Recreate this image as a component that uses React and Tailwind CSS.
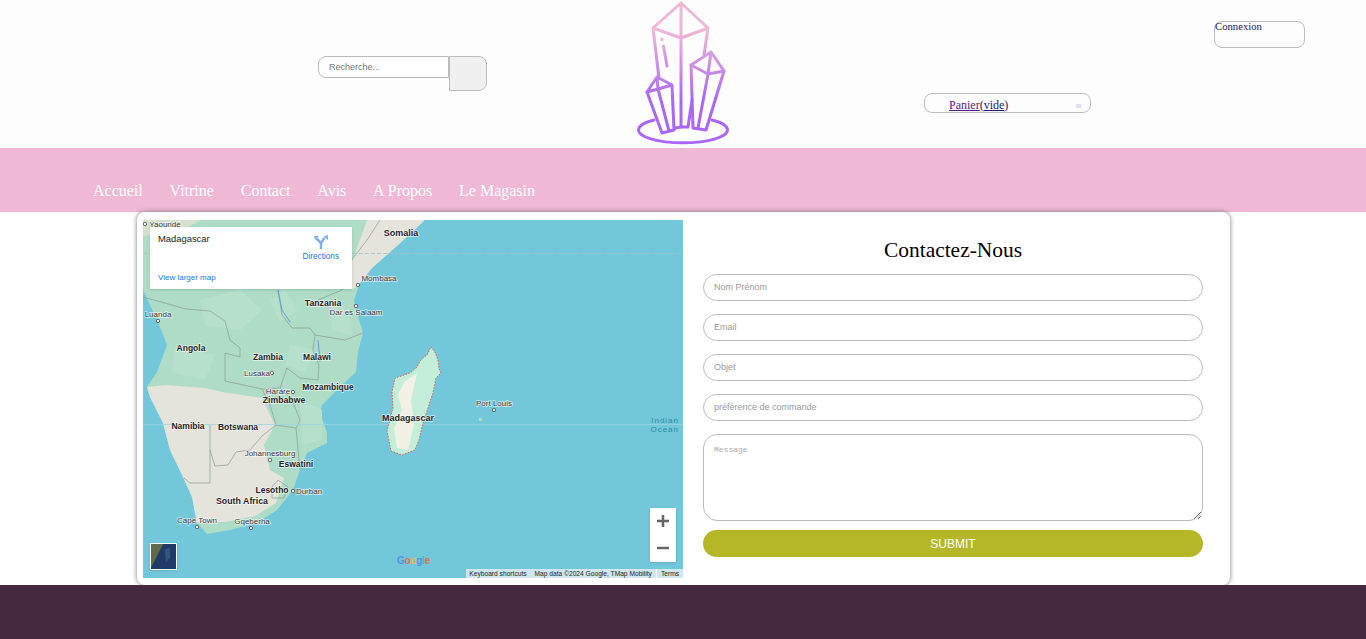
import React from "react";

const serif = "font-['Liberation_Serif',serif]";
const sans = "font-['Liberation_Sans',sans-serif]";

const navItems = ["Accueil", "Vitrine", "Contact", "Avis", "A Propos", "Le Magasin"];
const fields = ["Nom Prénom", "Email", "Objet", "préférence de commande"];

const bigLabels = [
  ["Somalia", 401, 236, 9],
  ["Tanzania", 323, 306, 8.7],
  ["Angola", 191, 351, 8.5],
  ["Zambia", 268, 360, 8.5],
  ["Malawi", 317, 360, 8.5],
  ["Mozambique", 328, 390, 8.5],
  ["Zimbabwe", 284, 403, 8.7],
  ["Namibia", 188, 429, 8.5],
  ["Botswana", 238, 430, 8.5],
  ["Madagascar", 408, 421, 9],
  ["Eswatini", 296, 467, 8.5],
  ["Lesotho", 272, 493, 8.5],
  ["South Africa", 242, 504, 8.8],
];

const smallLabels = [
  ["Mombasa", 379, 281],
  ["Dar es Salaam", 356, 315],
  ["Luanda", 158, 317],
  ["Lusaka", 257, 376],
  ["Harare", 278, 394],
  ["Johannesburg", 270, 456],
  ["Durban", 309, 494],
  ["Cape Town", 197, 523],
  ["Gqeberha", 252, 524],
  ["Port Louis", 494, 406],
  ["Yaoundé", 165, 227],
];

const dots = [
  [358, 285], [356, 306], [158, 321], [272, 373], [293, 392],
  [270, 460], [293, 491], [197, 527], [251, 528], [494, 410], [145, 224],
];

const patches = [
  "M200 300 L240 290 L262 310 L240 330 L205 325 Z",
  "M175 345 L215 355 L205 380 L172 372 Z",
  "M290 345 L315 350 L305 372 L285 365 Z",
  "M330 300 L350 310 L352 335 L332 330 Z",
  "M300 400 L322 410 L322 440 L302 445 Z",
  "M270 300 L285 290 L298 310 L280 322 Z",
];

function MapDrawing() {
  return (
    <svg viewBox="143 220 540 358" className="block w-full h-full">
      <rect x="143" y="220" width="540" height="358" fill="#73c7db" />
      <path
        d="M143 220 L425 220 L398 245 L372 268 L360 283 L354 300 L358 316 L363 333 L358 352 L356 372 L342 385 L322 405 L320 412 L327 433 L327 443 L307 453 L300 470 L293 490 L277 510 L257 523 L230 530 L207 534 L197 523 L192 497 L183 477 L170 450 L163 423 L150 397 L147 387 L157 372 L167 345 L158 322 L150 305 L143 290 Z"
        fill="#aedcc7"
      />
      {patches.map((d) => (
        <path key={d} d={d} fill="#b7e0cc" />
      ))}
      <path
        d="M150 397 L147 387 L165 385 L205 388 L222 392 L262 398 L275 425 L264 445 L270 470 L284 478 L276 503 L255 516 L225 522 L205 522 L197 523 L192 497 L183 477 L170 450 L163 423 Z"
        fill="#e4e3dc"
      />
      <path d="M352 290 L352 262 L367 220 L425 220 L398 245 L372 268 L360 283 Z" fill="#e4e3dc" />
      <path d="M143 220 L200 220 L180 232 L143 236 Z" fill="#d6e0cf" />

      <g fill="none" stroke="#8b9a94" strokeWidth="0.7">
        <path d="M143 297 L186 309 L210 311 L225 321 L230 340 L240 348 L240 357 L225 353 L225 381 L262 389" />
        <path d="M278 290 L282 315 L292 328 L310 328 L315 335 L313 350 L319 365 L318 380 L300 378 L287 368 L280 388 L262 389" />
        <path d="M315 335 L345 340 L363 333" />
        <path d="M210 425 L210 483 M210 450 L215 466 L228 465 L236 452 L250 450 L262 436 L276 425 L296 428 L300 470" />
        <path d="M280 388 L292 400 L300 420 L296 428 M262 389 L270 405 L276 425" />
        <path d="M184 478 L190 483 L210 483" />
        <path d="M272 487 L278 480 L288 487 L284 498 L272 498 Z" />
        <path d="M380 220 L367 240 L350 262 L342 290 L318 300" />
      </g>
      <path d="M278 290 L282 310 L290 322 M318 340 L320 362" fill="none" stroke="#5b9fd8" strokeWidth="1" />
      <path d="M143 253.500 L683 253.500" stroke="#a7bfc7" strokeWidth="0.8" strokeDasharray="4 2" />
      <path d="M143 424.500 L683 424.500" stroke="#9ed4e1" strokeWidth="0.8" />

      <path
        d="M431 347 L435 352 L438 360 L439 369 L441 373 L436 378 L433 393 L429 405 L423 423 L419 440 L415 450 L402 455 L391 451 L387 431 L391 415 L393 408 L392 392 L395 378 L404 375 L410 373 L417 367 L420 361 L424 357 L427 355 Z"
        fill="#c4edda"
        stroke="#e0564f"
        strokeWidth="1"
        strokeDasharray="1.500 1.500"
      />
      <path d="M417 373 L404 382 L398 395 L402 410 L394 428 L397 448 L408 450 L414 425 L411 400 Z" fill="#f3f1e6" />
      <path d="M479 418 L482 418 L482 421 L479 421 Z" fill="#aedcc7" />

      {dots.map(([x, y]) => (
        <circle key={`${x}-${y}`} cx={x} cy={y} r="1.700" fill="#fff" stroke="#444" strokeWidth="0.8" />
      ))}

      <g className={sans} textAnchor="middle" paintOrder="stroke" stroke="#ffffff" strokeWidth="1.500" strokeOpacity="0.7">
        {bigLabels.map(([label, x, y, size]) => (
          <text key={label} x={x} y={y} fontSize={size} fontWeight="700" fill="#222">
            {label}
          </text>
        ))}
        {smallLabels.map(([label, x, y]) => (
          <text key={label} x={x} y={y} fontSize="8" fill="#333">
            {label}
          </text>
        ))}
      </g>
      <g className={sans} textAnchor="end" fontSize="8" fill="#2f8ba6" letterSpacing="1">
        <text x="679" y="423">Indian</text>
        <text x="679" y="432">Ocean</text>
      </g>
    </svg>
  );
}

function MapOverlays() {
  return (
    <>
      <div className={`absolute left-[7px] top-[7px] w-[202px] h-[62px] bg-white shadow-sm ${sans}`}>
        <p className="absolute left-2 top-[6px] text-[9.400px] leading-[11px] text-[#222]">Madagascar</p>
        <div className="absolute right-[13px] top-2 flex flex-col items-center">
          <svg viewBox="0 0 14 14" className="w-[14px] h-[14px]">
            <path d="M7 14 V8 L2.500 3.500 M7 8 L10.500 3" fill="none" stroke="#7fb0ee" strokeWidth="2.500" />
            <path d="M0 1 H5 L1 5 Z M14 0 V5 L9.500 1.500 Z" fill="#7fb0ee" />
          </svg>
          <span className="text-[8.200px] leading-[11px] text-[#1a73e8] mt-[2px]">Directions</span>
        </div>
        <a className="absolute left-2 top-[45px] text-[8px] leading-[11px] text-[#1a73e8]">View larger map</a>
      </div>

      <div className="absolute left-[7px] bottom-2 w-[27px] h-[27px] border border-white shadow-sm bg-[#1f3a66] overflow-hidden">
        <svg viewBox="0 0 27 27" className="block w-full h-full">
          <path d="M0 0 H13 L9 8 L4 18 L0 25 Z" fill="#5f6a4a" />
          <path d="M15 6 L20 4 L21 14 L16 20 Z" fill="#2d5a7a" />
        </svg>
      </div>

      <span className={`absolute left-[254px] top-[335px] text-[10px] leading-[12px] font-bold tracking-tight ${sans}`}>
        <span className="text-[#5a8de8]">G</span>
        <span className="text-[#e8685a]">o</span>
        <span className="text-[#e8c04a]">o</span>
        <span className="text-[#5a8de8]">g</span>
        <span className="text-[#5cb870]">l</span>
        <span className="text-[#e8685a]">e</span>
      </span>

      <div className="absolute right-[7px] top-[288px] w-[26px] h-[54px] bg-white shadow-sm flex flex-col items-center justify-around">
        <svg viewBox="0 0 14 14" className="w-[14px] h-[14px] -mt-px">
          <path d="M7 1 V13 M1 7 H13" stroke="#666" strokeWidth="2.500" />
        </svg>
        <svg viewBox="0 0 14 14" className="w-[14px] h-[14px]">
          <path d="M1 7 H13" stroke="#666" strokeWidth="2.500" />
        </svg>
      </div>

      <div className={`absolute right-0 bottom-0 h-[9px] flex items-center bg-[#cfe7ed] text-[6.650px] leading-[9px] text-[#222] whitespace-nowrap ${sans}`}>
        <span className="pl-[3px] pr-2">Keyboard shortcuts</span>
        <span className="pr-[4px] border-r border-white">Map data ©2024 Google, TMap Mobility</span>
        <span className="px-1">Terms</span>
      </div>
    </>
  );
}

function CrystalLogo() {
  return (
    <svg viewBox="636 0 94 146" className="block w-[94px] h-[146px]">
      <defs>
        <linearGradient id="crystal" gradientUnits="userSpaceOnUse" x1="0" y1="30" x2="0" y2="100">
          <stop offset="0" stopColor="#efb8d5" />
          <stop offset="1" stopColor="#aa67f5" />
        </linearGradient>
      </defs>
      <g fill="none" stroke="url(#crystal)" strokeWidth="3" strokeLinejoin="round" strokeLinecap="round">
        <path d="M681 3 L653 28 L681 38 L708 28 Z M681 3 V127 M653 28 L659 78 M708 28 L704 55" />
        <path d="M662 39 V39.500 M663.500 46 L667 66" />
        <path d="M675 128 L681 127 L688 127 L692 100" />
        <path d="M657 77 L647 92 L658 89 L672 85 Z M657 77 L658 89" />
        <path d="M647 92 L662 133 L674 130 L672 85 M658 89 L669 131" />
        <path d="M711 52 L691 65 L708 74 L724 71 Z M711 52 L708 74" />
        <path d="M691 65 L693 128 L706 130 L724 71 M708 74 L698 128" />
        <path d="M654 120 A44.500 13 0 1 0 712 120" />
      </g>
    </svg>
  );
}

function Header() {
  return (
    <header className={`h-[148px] bg-[#fdfdfd] flex items-start ${sans}`}>
      <div className="ml-[318px] mt-14 flex items-start">
        <input
          placeholder="Recherche..."
          className="w-[131px] h-[22px] pl-[10px] text-[9px] border border-[#bbb] rounded-l-lg bg-white placeholder:text-[#757575] outline-none"
        />
        <button className="w-[38px] h-[35px] bg-[#f0f0f0] border border-[#bbb] rounded-r-lg" />
      </div>
      <div className="ml-[149px]">
        <CrystalLogo />
      </div>
      <div className={`ml-[194px] mt-[93px] w-[167px] h-5 relative border border-[#bbb] rounded-lg pl-6 pt-[3px] text-xs leading-[16px] text-[#551a8b] ${serif}`}>
        <a className="underline text-[#551a8b]">Panier</a>
        <span className="text-[#1a1a6e]">(<span className="underline">vide</span>)</span>
        <span className="absolute right-[9px] bottom-1 w-[5px] h-1 bg-[#e6dcf8]" />
      </div>
      <div className={`ml-[123px] mt-[21px] w-[91px] h-[27px] border border-[#bbb] rounded-lg text-[10.700px] leading-[9px] text-[#1a1a5e] ${serif}`}>
        Connexion
      </div>
    </header>
  );
}

function Nav() {
  return (
    <nav className={`h-16 bg-[#efb8d5] pl-[93px] pt-[33px] flex gap-[26.800px] text-base leading-[20px] text-white ${serif}`}>
      {navItems.map((item) => (
        <a key={item}>{item}</a>
      ))}
    </nav>
  );
}

function ContactForm() {
  return (
    <form className={`w-[500px] ml-5 flex flex-col ${sans}`}>
      <h1 className={`text-center text-[21.440px] leading-[25px] mt-[18px] mb-[11px] text-black ${serif}`}>Contactez-Nous</h1>
      {fields.map((field) => (
        <input
          key={field}
          placeholder={field}
          className="h-[27px] mb-[13px] pl-[10px] pr-[11px] pb-[2px] text-[9px] border border-[#bbb] rounded-[14px] bg-white placeholder:text-[#999] outline-none"
        />
      ))}
      <textarea
        placeholder="Message"
        className="block h-[87px] px-[10px] pt-[9px] pb-2 text-[8px] leading-[11px] border border-[#bbb] rounded-[14px] bg-white placeholder:text-[#aaa] outline-none font-['Liberation_Mono',monospace]"
      />
      <button type="button" className="mt-[9px] h-[27px] rounded-[14px] bg-[#b5b727] text-white text-xs font-medium pt-px">
        SUBMIT
      </button>
    </form>
  );
}

export default function App() {
  return (
    <div className="bg-white min-h-[639px] flex flex-col">
      <Header />
      <Nav />
      <main className="h-[373px] bg-white">
        <div className="ml-[137px] w-[1093px] h-[373px] bg-white rounded-lg shadow-[0_0_5px_#777] pl-[6px] pt-2 flex items-start">
          <div className="relative w-[540px] h-[358px] overflow-hidden">
            <MapDrawing />
            <MapOverlays />
          </div>
          <ContactForm />
        </div>
      </main>
      <footer className="h-[54px] bg-[#45293f]" />
    </div>
  );
}
